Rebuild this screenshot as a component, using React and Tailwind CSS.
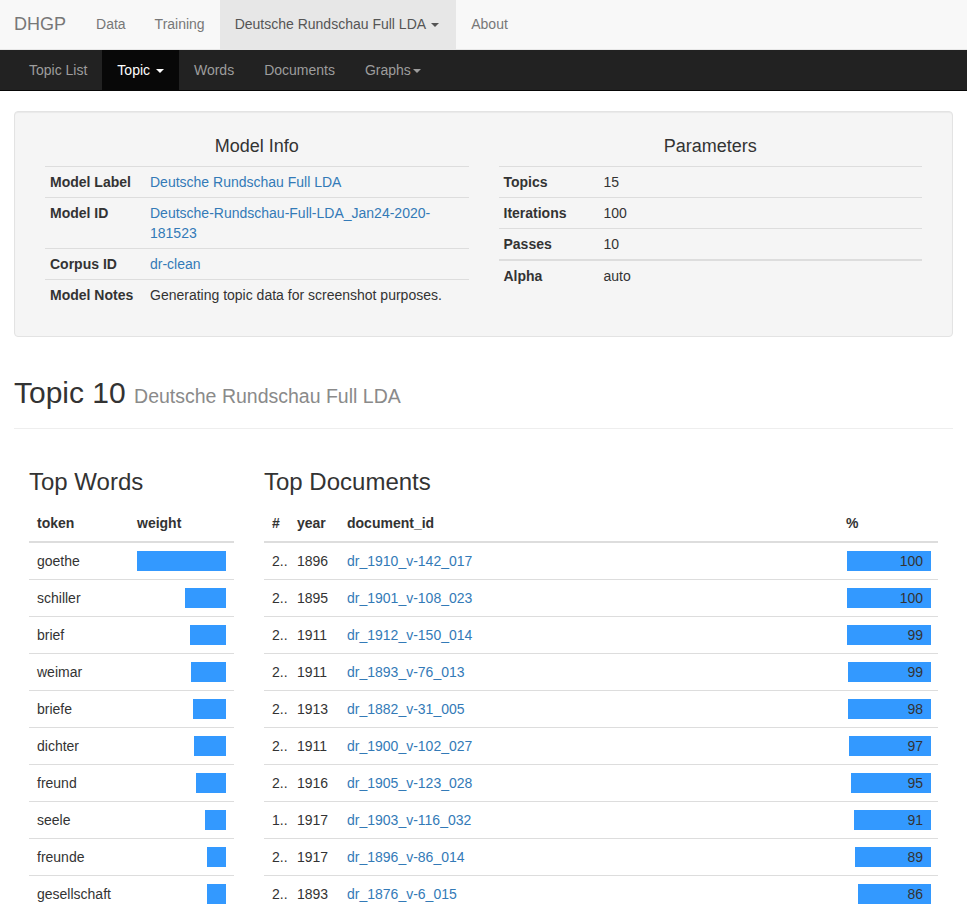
import React from "react";

const words = [
  ["goethe", 89],
  ["schiller", 41],
  ["brief", 36],
  ["weimar", 35],
  ["briefe", 33],
  ["dichter", 32],
  ["freund", 30],
  ["seele", 21],
  ["freunde", 19],
  ["gesellschaft", 19],
];

const docs = [
  ["2..", 1896, "dr_1910_v-142_017", 100, 84],
  ["2..", 1895, "dr_1901_v-108_023", 100, 84],
  ["2..", 1911, "dr_1912_v-150_014", 99, 84],
  ["2..", 1911, "dr_1893_v-76_013", 99, 83],
  ["2..", 1913, "dr_1882_v-31_005", 98, 83],
  ["2..", 1911, "dr_1900_v-102_027", 97, 82],
  ["2..", 1916, "dr_1905_v-123_028", 95, 80],
  ["1..", 1917, "dr_1903_v-116_032", 91, 77],
  ["2..", 1917, "dr_1896_v-86_014", 89, 76],
  ["2..", 1893, "dr_1876_v-6_015", 86, 73],
];

const Caret = ({ color = "border-t-[#777]" }) => (
  <span
    className={`inline-block w-0 h-0 ml-[2px] align-middle border-t-[4px] border-x-[4px] border-x-transparent ${color}`}
  ></span>
);

const InfoRow = ({ label, children }) => (
  <div className="flex border-t border-[#ddd]">
    <div className="w-[100px] px-[5px] py-[5px] font-bold">{label}</div>
    <div className="flex-1 px-[5px] py-[5px]">{children}</div>
  </div>
);

export default function App() {
  return (
    <div className="min-h-screen bg-white text-[14px] leading-[20px] text-[#333] font-['Liberation_Sans',Arial,sans-serif]">
      {/* Top navbar */}
      <nav className="h-[50px] bg-[#f8f8f8] border-b border-[#e7e7e7] flex">
        <span className="pl-[14px] pr-[15px] text-[18px] leading-[49px] text-[#777]">DHGP</span>
        <a className="px-[15px] leading-[49px] text-[#777]">Data</a>
        <a className="pl-[14px] pr-[15px] leading-[49px] text-[#777]">Training</a>
        <a className="pl-[15px] pr-[17px] leading-[49px] text-[#555] bg-[#e7e7e7]">
          Deutsche Rundschau Full LDA <Caret color="border-t-[#555]" />
        </a>
        <a className="px-[15px] leading-[49px] text-[#777]">About</a>
      </nav>

      {/* Secondary navbar */}
      <nav className="h-[41px] bg-[#222] border-b border-[#080808] flex pl-[14px]">
        <a className="px-[15px] leading-[40px] text-[#9d9d9d]">Topic List</a>
        <a className="px-[15px] leading-[40px] text-white bg-[#080808]">
          Topic <Caret color="border-t-white" />
        </a>
        <a className="px-[15px] leading-[40px] text-[#9d9d9d]">Words</a>
        <a className="px-[15px] leading-[40px] text-[#9d9d9d]">Documents</a>
        <a className="px-[15px] leading-[40px] text-[#9d9d9d]">
          Graphs<Caret color="border-t-[#9d9d9d]" />
        </a>
      </nav>

      <div className="px-[14px]">
        {/* Well */}
        <div className="mt-[20px] h-[226px] bg-[#f5f5f5] border border-[#e3e3e3] rounded-[4px] shadow-[inset_0_1px_1px_rgba(0,0,0,0.05)] flex pt-[24px] px-[30px] gap-[30px]">
          <div className="flex-1">
            <h4 className="text-[18px] leading-[20px] text-center mb-[10px]">Model Info</h4>
            <InfoRow label="Model Label">
              <a className="text-[#337ab7]">Deutsche Rundschau Full LDA</a>
            </InfoRow>
            <InfoRow label="Model ID">
              <a className="text-[#337ab7]">Deutsche-Rundschau-Full-LDA_Jan24-2020-181523</a>
            </InfoRow>
            <InfoRow label="Corpus ID">
              <a className="text-[#337ab7]">dr-clean</a>
            </InfoRow>
            <InfoRow label="Model Notes">Generating topic data for screenshot purposes.</InfoRow>
          </div>
          <div className="flex-1">
            <h4 className="text-[18px] leading-[20px] text-center mb-[10px]">Parameters</h4>
            <InfoRow label="Topics">15</InfoRow>
            <InfoRow label="Iterations">100</InfoRow>
            <InfoRow label="Passes">10</InfoRow>
            <div className="flex border-t-2 border-[#ddd]">
              <div className="w-[100px] px-[5px] py-[5px] font-bold">Alpha</div>
              <div className="flex-1 px-[5px] py-[5px]">auto</div>
            </div>
          </div>
        </div>

        {/* Page header */}
        <div className="mt-[39px] pb-[15px] border-b border-[#eee]">
          <h2 className="text-[30px] leading-[33px]">
            Topic 10 <small className="text-[19.5px] text-[#8a8a8a]">Deutsche Rundschau Full LDA</small>
          </h2>
        </div>

        {/* Topic content */}
        <div className="flex mt-[40px] px-[15px] gap-[30px]">
          <div className="w-[205px]">
            <h3 className="text-[24px] leading-[26px] mb-[10px]">Top Words</h3>
            <div className="flex font-bold border-b-2 border-[#ddd]">
              <div className="w-[100px] p-[8px]">token</div>
              <div className="flex-1 p-[8px]">weight</div>
            </div>
            {words.map(([w, width]) => (
              <div key={w} className="flex border-b border-[#ddd] last:border-b-0">
                <div className="w-[100px] p-[8px]">{w}</div>
                <div className="flex-1 p-[8px] flex justify-end">
                  <div className="h-[20px] bg-[#3399ff]" style={{ width }}></div>
                </div>
              </div>
            ))}
          </div>

          <div className="flex-1">
            <h3 className="text-[24px] leading-[26px] mb-[10px]">Top Documents</h3>
            <div className="flex font-bold border-b-2 border-[#ddd]">
              <div className="w-[25px] pl-[8px] py-[8px]">#</div>
              <div className="w-[50px] p-[8px]">year</div>
              <div className="flex-1 p-[8px]">document_id</div>
              <div className="w-[100px] p-[8px]">%</div>
            </div>
            {docs.map(([n, year, id, pct, width]) => (
              <div key={id} className="flex border-b border-[#ddd] last:border-b-0">
                <div className="w-[25px] pl-[8px] py-[8px] whitespace-nowrap">{n}</div>
                <div className="w-[50px] p-[8px]">{year}</div>
                <div className="flex-1 p-[8px]">
                  <a className="text-[#337ab7]">{id}</a>
                </div>
                <div className="w-[100px] py-[8px] pl-[8px] pr-[7px] flex justify-end">
                  <div className="h-[20px] bg-[#3399ff] text-right pr-[8px]" style={{ width }}>
                    {pct}
                  </div>
                </div>
              </div>
            ))}
          </div>
        </div>
      </div>
    </div>
  );
}
